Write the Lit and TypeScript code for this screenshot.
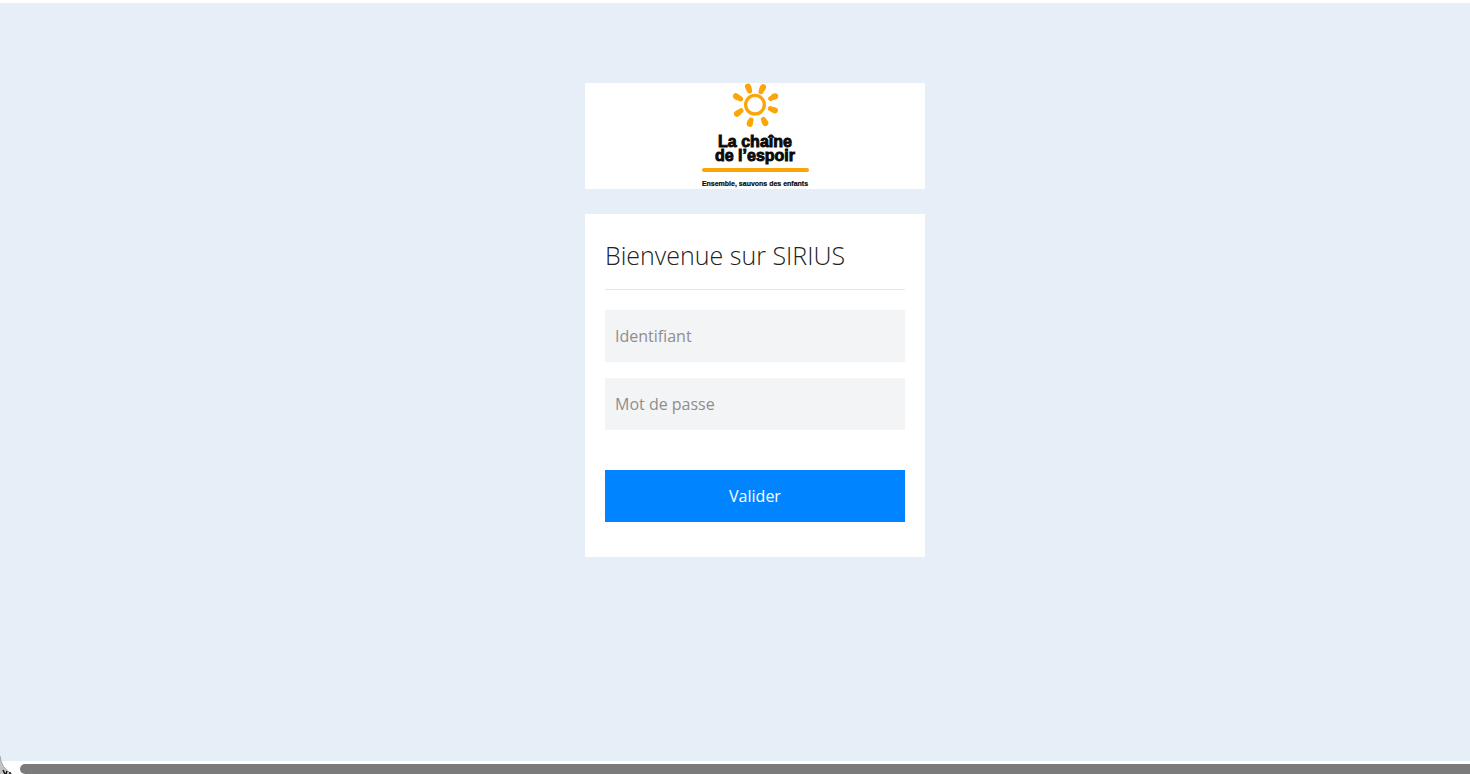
import { LitElement, html, css } from "lit";
import { customElement } from "lit/decorators.js";

@customElement("brand-logo")
export class BrandLogo extends LitElement {
  static styles = css`
    :host {
      display: flex;
      justify-content: center;
      background: #fff;
    }
    .logo {
      display: block;
      width: 110px;
      height: 106px;
    }
    .sun {
      fill: none;
      stroke: #faa60a;
      stroke-linecap: round;
    }
    .name {
      font: bold 16px "Liberation Sans", Arial, sans-serif;
      fill: #0a0a0a;
      stroke: #0a0a0a;
      stroke-width: 0.9px;
      text-anchor: middle;
    }
    .tagline {
      font: bold 7px "Liberation Sans", Arial, sans-serif;
      fill: #0a0a0a;
      stroke: #0a0a0a;
      stroke-width: 0.2px;
      text-anchor: middle;
    }
  `;

  render() {
    return html`
      <svg class="logo" viewBox="0 0 110 106" role="img" aria-label="La chaîne de l’espoir">
        <g class="sun" transform="translate(25 -3) scale(0.3333)">
          <circle cx="90" cy="74" r="28" stroke-width="10" />
          <path
            stroke-width="15"
            d="M68 19L74 33M115 20L108 35M152 48L137 56M151 92L136 86M122 130L115 118M75 133L78 120M35 102L48 92M32 48L47 57"
          />
          <path
            stroke-width="18"
            d="M69 20L71 25M114 22L112 26M150 49L147 50M149 91L146 90M121 129L119 126M74 131L75 127M36 101L39 99M33 49L36 51"
          />
        </g>
        <text class="name" x="55" y="64">La chaîne</text>
        <text class="name" x="55" y="78">de l’espoir</text>
        <path d="M4 87H107" stroke="#faa60a" stroke-width="4" stroke-linecap="round" />
        <text class="tagline" x="55" y="103">Ensemble, sauvons des enfants</text>
      </svg>
    `;
  }
}

@customElement("login-form")
export class LoginForm extends LitElement {
  static styles = css`
    :host {
      display: block;
      background: #fff;
      padding: 23px 20px 35px;
    }
    .title {
      margin: 0 0 20px;
      padding-bottom: 16px;
      border-bottom: 1px solid #e7e7e7;
      font-size: 25px;
      font-weight: 300;
      line-height: 36px;
      color: #222;
    }
    .form {
      display: flex;
      flex-direction: column;
      gap: 16px;
    }
    .field,
    .submit {
      display: block;
      box-sizing: border-box;
      width: 100%;
      height: 52px;
      margin: 0;
      border: 0;
      border-radius: 0;
      font: inherit;
    }
    .field {
      padding: 0 10px;
      background: #f3f4f6;
      color: #333;
    }
    .field::placeholder {
      color: #8e8e8e;
      opacity: 1;
    }
    .submit {
      margin-top: 24px;
      background: #0084ff;
      color: #fff;
      cursor: pointer;
    }
  `;

  private submit(event: Event) {
    event.preventDefault();
  }

  render() {
    return html`
      <h1 class="title">Bienvenue sur SIRIUS</h1>
      <form class="form" @submit=${this.submit}>
        <input class="field" type="text" name="login" placeholder="Identifiant" aria-label="Identifiant" />
        <input class="field" type="password" name="password" placeholder="Mot de passe" aria-label="Mot de passe" />
        <button class="submit" type="submit">Valider</button>
      </form>
    `;
  }
}

@customElement("app-root")
export class AppRoot extends LitElement {
  static styles = css`
    :host {
      display: flex;
      flex-direction: column;
      height: 100vh;
      overflow: hidden;
      background: #fff;
      font: 16px/22px "Open Sans", "Noto Sans", sans-serif;
    }
    .page {
      flex: 1;
      min-height: 0;
      margin-top: 3px;
      padding: 80px 0 0 40px;
      background: #e6eef8;
    }
    .column {
      display: flex;
      flex-direction: column;
      gap: 25px;
      width: 340px;
      margin: 0 auto;
    }
    .bar {
      display: flex;
      padding: 3px 0 0 20px;
    }
    .thumb {
      flex: 1;
      height: 10px;
      border-radius: 5px 0 0 5px;
      background: #7b7b7b;
    }
    .corner {
      position: absolute;
      left: 0;
      bottom: 0;
      width: 12px;
      height: 18px;
    }
  `;

  render() {
    return html`
      <main class="page">
        <div class="column">
          <brand-logo></brand-logo>
          <login-form></login-form>
        </div>
      </main>
      <div class="bar"><div class="thumb"></div></div>
      <svg class="corner" viewBox="0 0 12 18" aria-hidden="true">
        <path d="M0 0Q1 12 12 18H0Z" fill="#c4c4c4" />
        <path d="M0 0Q1 12 12 18" fill="none" stroke="#a2a2a2" />
        <path d="M3 14L5 18M7 15L6 18M9 17H11" fill="none" stroke="#111" stroke-width="1.4" />
      </svg>
    `;
  }
}
